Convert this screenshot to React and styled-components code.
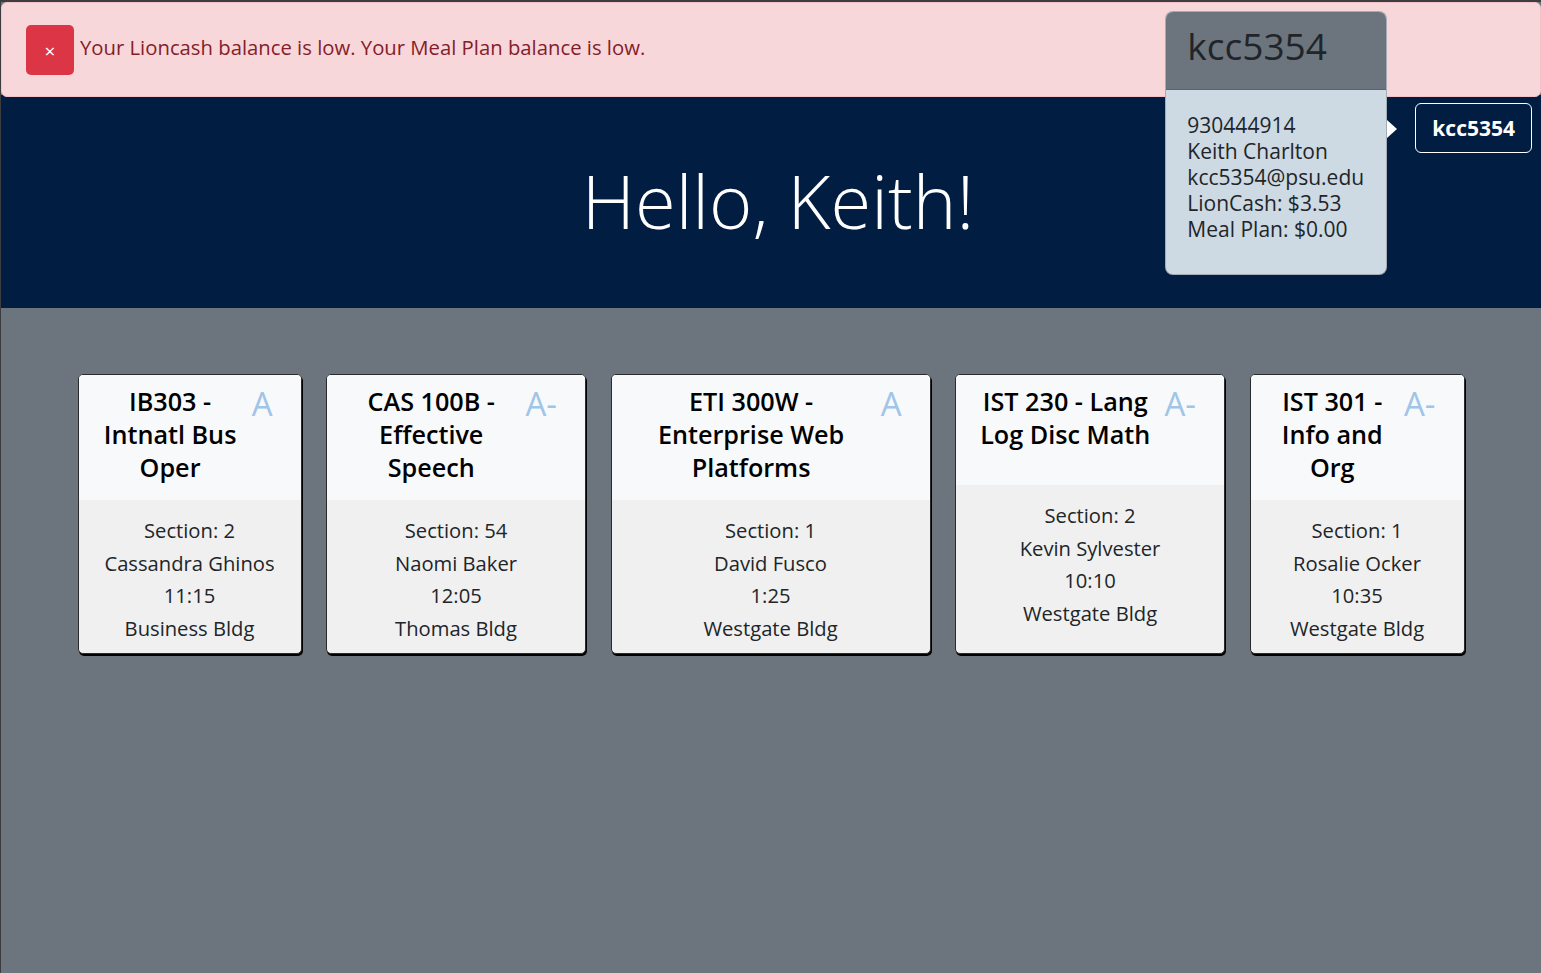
import React from "react";
import styled, { createGlobalStyle } from "styled-components";

const GlobalStyle = createGlobalStyle`
  html, body {
    margin: 0;
    padding: 0;
    background: #6c757d;
  }
  body {
    font-family: "Open Sans", "Noto Sans", sans-serif;
    color: #212529;
  }
  * {
    box-sizing: border-box;
  }
`;

const Page = styled.div`
  min-height: 973px;
  background: #6c757d;
  border-top: 2px solid #3b3d40;
  border-left: 1px solid #3b3d40;
`;

const AlertBar = styled.div`
  display: flex;
  align-items: center;
  gap: 6px;
  height: 95px;
  padding: 0 24px;
  background: #f8d7da;
  border: 1px solid #f5c2c7;
  border-radius: 6px;
  position: relative;
  z-index: 1;
`;

const CloseButton = styled.button`
  width: 48px;
  height: 50px;
  border: none;
  border-radius: 5px;
  background: #dc3545;
  color: #fff;
  font-family: "Open Sans", sans-serif;
  font-size: 19px;
  line-height: 1;
  padding: 4px 0 0;
  cursor: pointer;
`;

const AlertText = styled.span`
  color: #842029;
  font-size: 20.3px;
  margin-top: -5px;
`;

const Hero = styled.header`
  display: grid;
  grid-template-columns: 1fr auto 1fr;
  height: 213px;
  background: #011e42;
  margin-top: -2px;
`;

const Greeting = styled.h1`
  grid-column: 2;
  align-self: center;
  margin: 0;
  color: #fff;
  font-size: 74px;
  font-weight: 350;
  line-height: 1.2;
  padding: 0 0 0 14px;
`;

const UserSlot = styled.div`
  grid-column: 3;
  justify-self: end;
  align-self: start;
  position: relative;
  margin: 8px 9px 0 0;
`;

const UserButton = styled.button`
  height: 50px;
  padding: 0 16px;
  background: transparent;
  color: #fff;
  border: 1px solid #fff;
  border-radius: 6px;
  font-family: "Open Sans", sans-serif;
  font-size: 21px;
  font-weight: 700;
`;

const Popover = styled.div`
  position: absolute;
  top: -92px;
  right: calc(100% + 28px);
  width: 222px;
  height: 264px;
  border: 1px solid rgba(0, 0, 0, 0.2);
  border-radius: 8px;
  background: #cdd9e3;
  z-index: 2;

  &::after {
    content: "";
    position: absolute;
    top: 108px;
    right: -11px;
    border-style: solid;
    border-width: 9px 0 9px 10px;
    border-color: transparent transparent transparent #fff;
  }
`;

const PopoverHeader = styled.div`
  height: 78px;
  padding: 12px 21px 0;
  background: #6c757d;
  border-bottom: 1px solid #5c636a;
  border-radius: 7px 7px 0 0;
  font-size: 37px;
  line-height: 1.2;
  color: #212529;
`;

const PopoverBody = styled.div`
  padding: 22px 21px;
  font-size: 21px;
  line-height: 26px;
  color: #212529;
`;

const Main = styled.main`
  padding-top: 66px;
`;

const CardRow = styled.div`
  display: flex;
  justify-content: center;
  align-items: stretch;
  gap: 24.5px;
`;

const Card = styled.div`
  display: flex;
  flex-direction: column;
  width: ${({ $w }) => $w}px;
  border: 1px solid #2b2b2b;
  border-radius: 5px;
  box-shadow: 1px 2px 0 #000;
  overflow: hidden;
  background: #f0f0f0;
`;

const CardHeader = styled.div`
  display: flex;
  gap: 10px;
  min-height: 110px;
  padding: 10px 28px 16px 20px;
  background: #f8f9fa;
`;

const CardTitle = styled.h3`
  flex: 1;
  margin: 0;
  text-align: center;
  font-size: 25.2px;
  font-weight: 600;
  line-height: 33px;
  color: #000;
`;

const Grade = styled.span`
  font-size: 33px;
  font-weight: 400;
  line-height: 38px;
  color: #9fc5e8;
`;

const CardBody = styled.div`
  flex: 1;
  padding: 14px 8px 9px;
  text-align: center;
  font-size: 20.2px;
  line-height: 32.5px;
  color: #212529;
`;

const courses = [
  {
    w: 224,
    title: ["IB303 -", "Intnatl Bus", "Oper"],
    grade: "A",
    lines: ["Section: 2", "Cassandra Ghinos", "11:15", "Business Bldg"],
  },
  {
    w: 260,
    title: ["CAS 100B -", "Effective", "Speech"],
    grade: "A-",
    lines: ["Section: 54", "Naomi Baker", "12:05", "Thomas Bldg"],
  },
  {
    w: 320,
    title: ["ETI 300W -", "Enterprise Web", "Platforms"],
    grade: "A",
    lines: ["Section: 1", "David Fusco", "1:25", "Westgate Bldg"],
  },
  {
    w: 270,
    title: ["IST 230 - Lang", "Log Disc Math"],
    grade: "A-",
    lines: ["Section: 2", "Kevin Sylvester", "10:10", "Westgate Bldg"],
  },
  {
    w: 215,
    title: ["IST 301 -", "Info and", "Org"],
    grade: "A-",
    lines: ["Section: 1", "Rosalie Ocker", "10:35", "Westgate Bldg"],
  },
];

const CourseCard = ({ course }) => (
  <Card $w={course.w}>
    <CardHeader>
      <CardTitle>
        {course.title.map((t, i) => (
          <React.Fragment key={i}>
            {i > 0 && <br />}
            {t}
          </React.Fragment>
        ))}
      </CardTitle>
      <Grade>{course.grade}</Grade>
    </CardHeader>
    <CardBody>
      {course.lines.map((l) => (
        <div key={l}>{l}</div>
      ))}
    </CardBody>
  </Card>
);

export default function App() {
  return (
    <>
      <GlobalStyle />
      <Page>
        <AlertBar>
          <CloseButton>×</CloseButton>
          <AlertText>
            Your Lioncash balance is low. Your Meal Plan balance is low.
          </AlertText>
        </AlertBar>
        <Hero>
          <Greeting>Hello, Keith!</Greeting>
          <UserSlot>
            <UserButton>kcc5354</UserButton>
            <Popover>
              <PopoverHeader>kcc5354</PopoverHeader>
              <PopoverBody>
                930444914
                <br />
                Keith Charlton
                <br />
                kcc5354@psu.edu
                <br />
                LionCash: $3.53
                <br />
                Meal Plan: $0.00
              </PopoverBody>
            </Popover>
          </UserSlot>
        </Hero>
        <Main>
          <CardRow>
            {courses.map((c) => (
              <CourseCard key={c.title[0]} course={c} />
            ))}
          </CardRow>
        </Main>
      </Page>
    </>
  );
}
